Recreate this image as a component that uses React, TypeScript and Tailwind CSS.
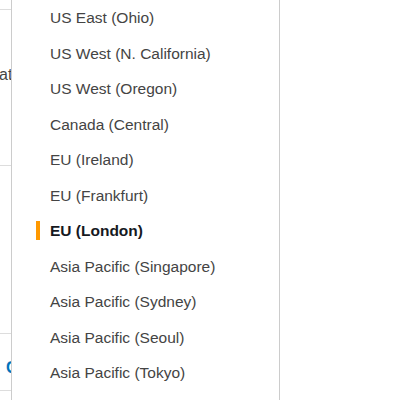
import React from "react";

const regions = [
  "US East (Ohio)",
  "US West (N. California)",
  "US West (Oregon)",
  "Canada (Central)",
  "EU (Ireland)",
  "EU (Frankfurt)",
  "EU (London)",
  "Asia Pacific (Singapore)",
  "Asia Pacific (Sydney)",
  "Asia Pacific (Seoul)",
  "Asia Pacific (Tokyo)",
];

export default function App() {
  return (
    <div
      className="flex h-[400px] w-[400px] overflow-hidden bg-white"
      style={{ fontFamily: '"Liberation Sans", Arial, sans-serif' }}
    >
      <div className="flex w-[11px] shrink-0 flex-col overflow-hidden">
        <div className="h-[9px]" />
        <div className="h-[156px] border-t border-[#dddddd]">
          <div className="ml-[-1px] mt-[55px] whitespace-nowrap text-[16px] leading-[20px] text-[#444]">
            at
          </div>
        </div>
        <div className="h-[168px] border-t border-[#dddddd]" />
        <div className="h-[57px] border-t border-[#dddddd]">
          <div className="ml-[6px] mt-[24px] whitespace-nowrap text-[16px] font-bold leading-[20px] text-[#0073bb]">
            C
          </div>
        </div>
        <div className="flex-1 border-t border-[#dddddd]" />
      </div>
      <div className="w-[269px] shrink-0 border-x border-[#cccccc] bg-white">
        {regions.map((r) => {
          const sel = r === "EU (London)";
          return (
            <div key={r} className="relative flex h-[35.5px] items-center pl-[38px]">
              {sel && (
                <div className="absolute left-[24px] top-[8px] h-[19px] w-[4px] bg-[#ff9900]" />
              )}
              <span
                className={
                  sel
                    ? "text-[15.5px] font-bold text-[#16191f]"
                    : "text-[15.5px] text-[#444444]"
                }
              >
                {r}
              </span>
            </div>
          );
        })}
      </div>
      <div className="flex-1 bg-white" />
    </div>
  );
}
